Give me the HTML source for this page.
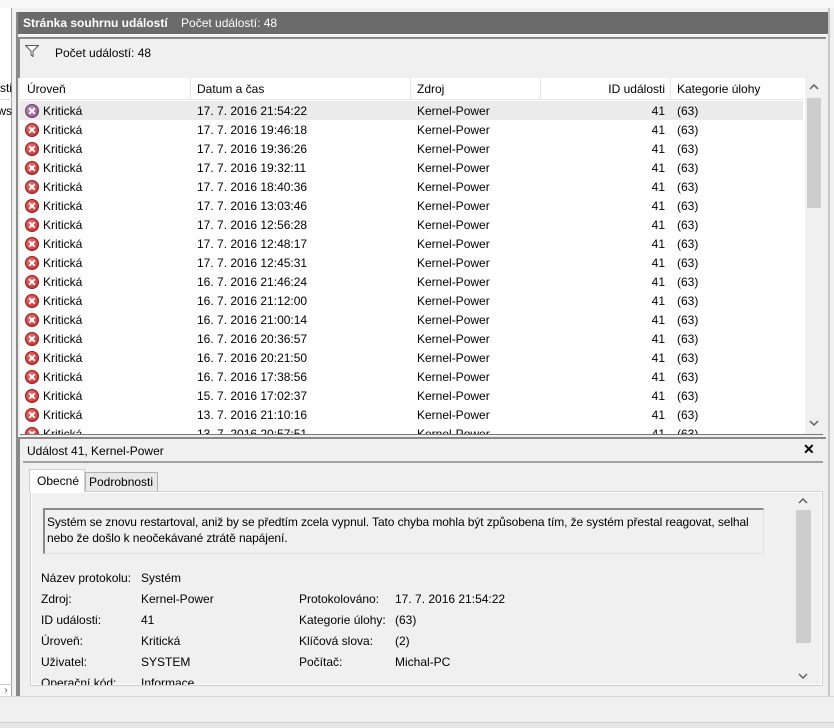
<!DOCTYPE html>
<html><head><meta charset="utf-8"><style>
*{margin:0;padding:0;box-sizing:border-box}
body{width:834px;height:728px;overflow:hidden;background:#f0f0f0;font-family:"Liberation Sans",sans-serif;font-size:12px;color:#000;position:relative}
.a{position:absolute;white-space:nowrap}
.ic{position:absolute;width:14px;height:14px;border-radius:50%;background:radial-gradient(circle at 40% 35%,#f07070,#c82020);border:1px solid #902020}
.ic::before,.ic::after{content:"";position:absolute;left:2px;top:5px;width:8px;height:2px;background:#fff;transform:rotate(45deg)}
.ic::after{transform:rotate(-45deg)}
.ic.sel{background:radial-gradient(circle at 40% 35%,#c090c0,#8a4a8a);border-color:#6a3a6a}
</style></head><body>
<div class="a" style="left:0;top:0;width:834px;height:8px;background:#f8f8f8"></div>
<div class="a" style="left:0;top:8px;width:12px;height:688px;background:#fff;border-right:1px solid #a0a0a0"></div>
<div class="a" style="left:0;top:81px;width:12px;height:19px;border-bottom:1px solid #ddd;font-size:12px;overflow:hidden;direction:rtl">sti</div>
<div class="a" style="left:0;top:104px;width:12px;overflow:hidden;direction:rtl">ws</div>
<div class="a" style="left:0;top:684px;width:12px;height:12px;font-size:10px;color:#555;text-align:center;border-top:1px solid #ccc">›</div>
<div class="a" style="left:16px;top:12px;width:812px;height:684px;border-left:2px solid #8a8a8a;background:#f0f0f0"></div>
<div class="a" style="left:828px;top:8px;width:2px;height:688px;background:#c8c8c8"></div>
<div class="a" style="left:18px;top:12px;width:810px;height:23px;background:#6b6b6b;border-bottom:1px solid #fff"></div>
<div class="a" style="left:23px;top:16px;color:#fff"><b>Stránka souhrnu událostí</b>&nbsp;&nbsp;&nbsp;&nbsp;Počet událostí: 48</div>
<div class="a" style="left:18px;top:37px;width:808px;height:41px;border-top:2px solid #8a8a8a;border-left:2px solid #8a8a8a;background:#f0f0f0"></div>
<svg class="a" style="left:25px;top:45px" width="14" height="12" viewBox="0 0 14 12"><path d="M0.5 0.5H13.5L8 6V11.5L6 10V6Z" fill="#fff" stroke="#555"/></svg>
<div class="a" style="left:55px;top:46px">Počet událostí: 48</div>
<div class="a" style="left:20px;top:78px;width:803px;height:357px;background:#fff;border-bottom:1px solid #777;overflow:hidden">
<div class="a" style="left:0;top:0;width:783px;height:22px;border-bottom:1px solid #e5e5e5"></div>
<div class="a" style="left:170px;top:0;width:1px;height:22px;background:#e5e5e5"></div>
<div class="a" style="left:390px;top:0;width:1px;height:22px;background:#e5e5e5"></div>
<div class="a" style="left:520px;top:0;width:1px;height:22px;background:#e5e5e5"></div>
<div class="a" style="left:650px;top:0;width:1px;height:22px;background:#e5e5e5"></div>
<div class="a" style="left:7px;top:4px">Úroveň</div>
<div class="a" style="left:177px;top:4px">Datum a čas</div>
<div class="a" style="left:397px;top:4px">Zdroj</div>
<div class="a" style="left:520px;top:4px;width:125px;text-align:right">ID události</div>
<div class="a" style="left:657px;top:4px">Kategorie úlohy</div>
<div class="a" style="left:0;top:23px;width:783px;height:19px;background:#ebebeb"></div>
<div id="rows"></div>
<div class="a" style="left:785px;top:0;width:18px;height:357px;background:#f0f0f0"></div>
<div class="a" style="left:787px;top:20px;width:14px;height:110px;background:#cdcdcd"></div>
<svg class="a" style="left:789px;top:6px" width="10" height="6"><path d="M1 5L5 1L9 5" fill="none" stroke="#606060" stroke-width="1.5"/></svg>
<svg class="a" style="left:789px;top:342px" width="10" height="6"><path d="M1 1L5 5L9 1" fill="none" stroke="#606060" stroke-width="1.5"/></svg>
</div>
<div class="a" style="left:18px;top:437px;width:808px;height:259px;border-top:2px solid #8a8a8a;border-left:2px solid #8a8a8a"></div>
<div class="a" style="left:27px;top:444px">Událost 41, Kernel-Power</div>
<div class="a" style="left:803px;top:441px;font-weight:bold;font-size:14px">✕</div>
<div class="a" style="left:23px;top:461px;width:800px;height:2px;background:#a0a0a0"></div>
<div class="a" style="left:30px;top:491px;width:793px;height:195px;background:#fff;border:1px solid #d0d0d0"></div>
<div class="a" style="left:32px;top:493px;width:789px;height:191px;background:#f0f0f0"></div>
<div class="a" style="left:29px;top:469px;width:56px;height:23px;background:#fff;border:1px solid #d0d0d0;border-bottom:none;padding:4px 0 0 7px">Obecné</div>
<div class="a" style="left:85px;top:472px;width:73px;height:19px;background:#e8e8e8;border:1px solid #b0b0b0;border-bottom:none;padding:2px 0 0 3px">Podrobnosti</div>
<div class="a" style="left:795px;top:493px;width:17px;height:191px;background:#f0f0f0"></div>
<div class="a" style="left:796px;top:510px;width:15px;height:133px;background:#cdcdcd"></div>
<svg class="a" style="left:798px;top:498px" width="10" height="6"><path d="M1 5L5 1L9 5" fill="none" stroke="#606060" stroke-width="1.5"/></svg>
<svg class="a" style="left:798px;top:673px" width="10" height="6"><path d="M1 1L5 5L9 1" fill="none" stroke="#606060" stroke-width="1.5"/></svg>
<div class="a" style="left:43px;top:508px;width:721px;height:46px;border-top:2px solid #888;border-left:2px solid #888;border-right:1px solid #e0e0e0;border-bottom:1px solid #e0e0e0;padding:4px 0 0 2px;line-height:16px;white-space:normal;letter-spacing:-0.1px">Systém se znovu restartoval, aniž by se předtím zcela vypnul. Tato chyba mohla být způsobena tím, že systém přestal reagovat, selhal nebo že došlo k neočekávané ztrátě napájení.</div>
<div class="a" style="left:32px;top:565px;width:762px;height:120px;overflow:hidden">
<div class="a" style="left:9px;top:6px">Název protokolu:</div><div class="a" style="left:109px;top:6px">Systém</div>
<div class="a" style="left:9px;top:27px">Zdroj:</div><div class="a" style="left:109px;top:27px">Kernel-Power</div>
<div class="a" style="left:267px;top:27px">Protokolováno:</div><div class="a" style="left:363px;top:27px">17. 7. 2016 21:54:22</div>
<div class="a" style="left:9px;top:48px">ID události:</div><div class="a" style="left:109px;top:48px">41</div>
<div class="a" style="left:267px;top:48px">Kategorie úlohy:</div><div class="a" style="left:363px;top:48px">(63)</div>
<div class="a" style="left:9px;top:69px">Úroveň:</div><div class="a" style="left:109px;top:69px">Kritická</div>
<div class="a" style="left:267px;top:69px">Klíčová slova:</div><div class="a" style="left:363px;top:69px">(2)</div>
<div class="a" style="left:9px;top:90px">Uživatel:</div><div class="a" style="left:109px;top:90px">SYSTEM</div>
<div class="a" style="left:267px;top:90px">Počítač:</div><div class="a" style="left:363px;top:90px">Michal-PC</div>
<div class="a" style="left:9px;top:111px">Operační kód:</div><div class="a" style="left:109px;top:111px">Informace</div>
</div>
<div class="a" style="left:0;top:696px;width:834px;height:1px;background:#d8d8d8"></div>
<div class="a" style="left:0;top:722px;width:834px;height:6px;background:#e6e6e6;border-top:1px solid #d0d0d0"></div>
<script>
var d=["17. 7. 2016 21:54:22","17. 7. 2016 19:46:18","17. 7. 2016 19:36:26","17. 7. 2016 19:32:11","17. 7. 2016 18:40:36","17. 7. 2016 13:03:46","17. 7. 2016 12:56:28","17. 7. 2016 12:48:17","17. 7. 2016 12:45:31","16. 7. 2016 21:46:24","16. 7. 2016 21:12:00","16. 7. 2016 21:00:14","16. 7. 2016 20:36:57","16. 7. 2016 20:21:50","16. 7. 2016 17:38:56","15. 7. 2016 17:02:37","13. 7. 2016 21:10:16","13. 7. 2016 20:57:51"];
var h="";d.forEach(function(x,i){var y=23+i*19;
h+='<div class="ic'+(i==0?' sel':'')+'" style="left:5px;top:'+(y+3)+'px"></div><div class="a" style="left:23px;top:'+(y+3)+'px">Kritická</div><div class="a" style="left:177px;top:'+(y+3)+'px">'+x+'</div><div class="a" style="left:397px;top:'+(y+3)+'px">Kernel-Power</div><div class="a" style="left:520px;top:'+(y+3)+'px;width:125px;text-align:right">41</div><div class="a" style="left:657px;top:'+(y+3)+'px">(63)</div>';});
document.getElementById("rows").innerHTML=h;
</script>
</body></html>
